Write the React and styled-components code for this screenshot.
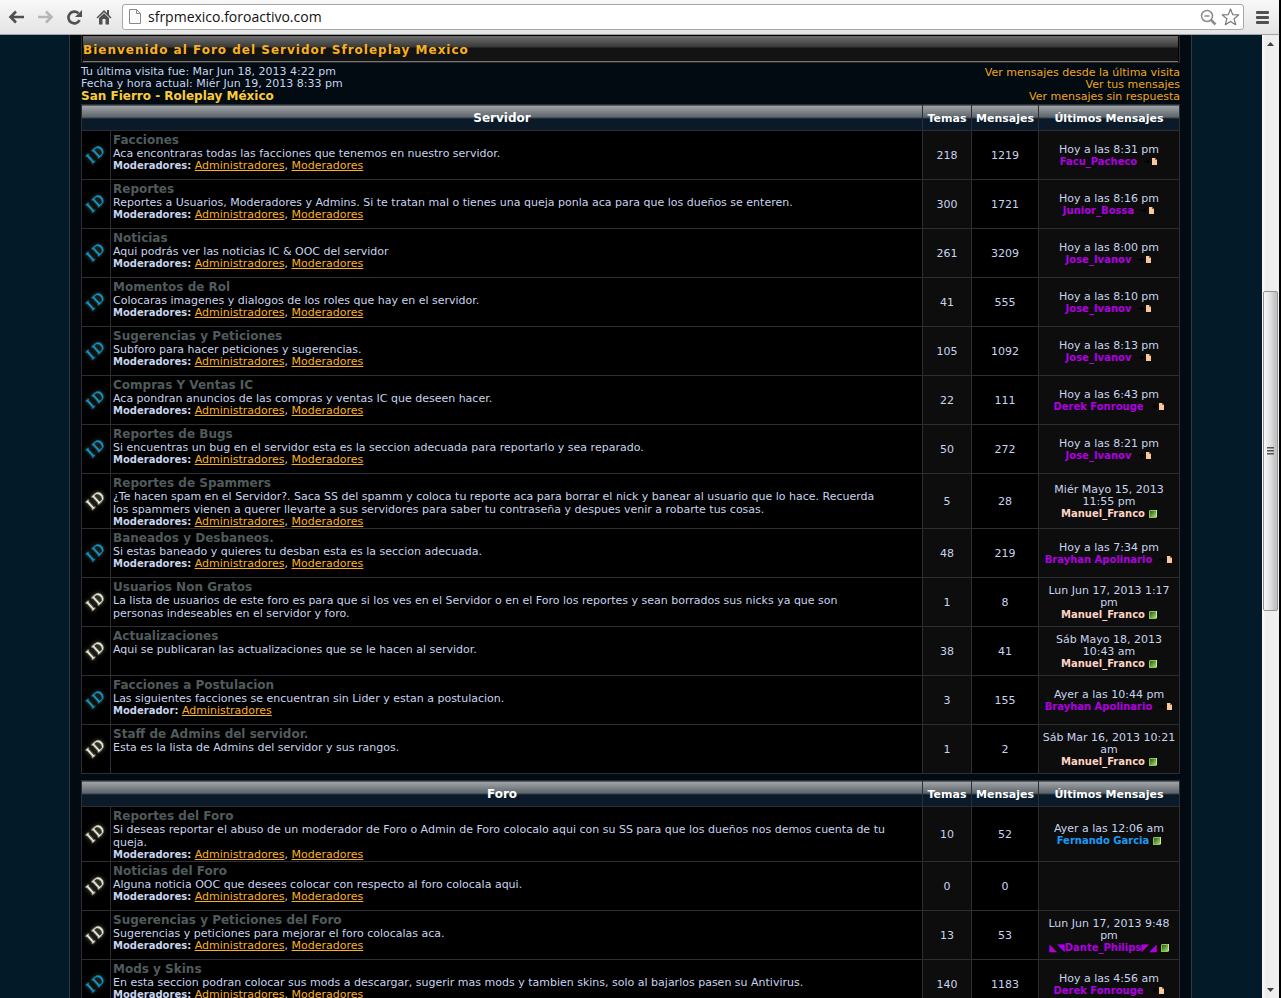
import React from "react";
import styled, { createGlobalStyle } from "styled-components";

const GlobalStyle = createGlobalStyle`
* {
  box-sizing: border-box;
}

body {
  margin: 0;
  background: #000;
  font-family: Verdana, "DejaVu Sans", sans-serif;
}
`;

const Browser = styled.div`
height: 100vh;
padding-right: 2px;
display: flex;
flex-direction: column;
overflow: hidden;
background: #000;
`;

const Toolbar = styled.header`
flex: none;
height: 35px;
padding: 0 6px;
display: flex;
align-items: center;
gap: 8px;
background: linear-gradient(#f8f8f8, #e4e4e4);
border-bottom: 1px solid #a3a3a3;
`;

const ToolButton = styled.button`
width: 21px;
height: 24px;
padding: 0;
border: 0;
background: none;
display: flex;
align-items: center;
justify-content: center;
opacity: ${({ $faded }) => ($faded ? "0.35" : "1")};
`;

const AddressBar = styled.form`
flex: 1;
height: 26px;
padding: 0 3px 0 5px;
display: flex;
align-items: center;
gap: 6px;
background: #fff;
border: 1px solid #a8a8a8;
border-radius: 3px;
`;

const AddressInput = styled.input`
flex: 1;
min-width: 0;
padding: 0;
border: 0;
outline: 0;
background: none;
color: #111;
font: 14px/20px "Open Sans", sans-serif;
`;

const BarIcons = styled.div`
display: flex;
align-items: center;
gap: 4px;
`;

const Viewport = styled.div`
flex: 1;
min-height: 0;
display: flex;
`;

const Page = styled.div`
flex: 1;
min-width: 0;
padding: 0 70px 0 69px;
overflow: hidden;
background: #031a28;
`;

const Forum = styled.main`
min-height: 100%;
padding: 0 11px;
background: #010b11;
border: solid #33383d;
border-width: 0 1px;
`;

const Banner = styled.div`
height: 28px;
padding: 1px 1px 0;
background: #000;
border: solid #2b2b2d;
border-width: 0 1px 1px;
`;

const BannerTitle = styled.h1`
height: 26px;
margin: 0;
padding-top: 3px;
background: linear-gradient(#6e6e6e, #393939 11px, #131313 12px, #131313);
border-bottom: 1px solid #777;
color: #f9b11c;
font-size: 12px;
line-height: 22px;
letter-spacing: 1px;
white-space: nowrap;
overflow: hidden;
`;

const Welcome = styled.section`
padding: 3px 0 1px;
display: flex;
justify-content: space-between;
align-items: flex-end;
color: #c8d4ee;
font-size: 11px;
line-height: 12px;
`;

const ForumName = styled.a`
display: block;
color: #fccb3a;
font-size: 12px;
font-weight: bold;
line-height: 13px;
text-decoration: none;
`;

const SearchLinks = styled.nav`
display: flex;
flex-direction: column;
align-items: flex-end;

a {
  color: #f0a51c;
  text-decoration: none;
}
`;

const Category = styled.table`
width: 100%;
margin-bottom: 6px;
table-layout: fixed;
border-collapse: collapse;
color: #c8d4ee;

th, td {
  border: 1px solid #2c2e33;
}
`;

const Col = styled.col`
width: ${({ $width }) => $width};
`;

const HeadCell = styled.th`
height: 26px;
padding: 1px 0 0;
background: linear-gradient(#a4a6a9, #596369 12px, #0a1a29 13px, #0a1a29);
color: #fff;
font-size: ${({ $small }) => ($small ? "11px" : "12px")};
line-height: 13px;
white-space: nowrap;
`;

const Cell = styled.td`
height: 49px;
padding: 2px 2px 0;
background: ${({ $light }) => ($light ? "#0d0d0d" : "#000")};
text-align: center;
font-size: 11px;
line-height: 12px;
`;

const IconCell = styled(Cell)`
padding: 0;

svg {
  display: block;
  margin: 0 auto;
}
`;

const InfoCell = styled(Cell)`
text-align: left;
vertical-align: top;
`;

const ForumTitle = styled.a`
display: block;
color: #505b5d;
font-size: 12px;
font-weight: bold;
line-height: 14px;
text-decoration: none;
`;

const Description = styled.p`
margin: 0;
padding-right: 32px;
line-height: 13px;
`;

const Moderators = styled.p`
margin: 0;

b {
  font-size: 10px;
}

a {
  color: #fbb024;
}
`;

const LastUser = styled.span`
font-size: 10px;
white-space: nowrap;

a {
  color: ${({ $color }) => $color};
  font-weight: bold;
  text-decoration: none;
}

svg {
  margin-left: 3px;
  vertical-align: -1px;
}
`;

const ScrollBar = styled.aside`
flex: none;
width: 17px;
display: flex;
flex-direction: column;
align-items: center;
background: linear-gradient(90deg, #fafafa, #ececec 4px, #f0f0f0);
`;

const ScrollButton = styled.button`
flex: none;
width: 17px;
height: 17px;
padding: 0;
border: 0;
background: none;
display: flex;
align-items: center;
justify-content: center;
`;

const Track = styled.div`
flex: 1;
display: flex;
flex-direction: column;
align-items: center;
`;

const Spacer = styled.div`
flex: ${({ $grow }) => $grow} 0 0;
`;

const Thumb = styled.div`
flex: 318 0 0;
width: 15px;
display: flex;
align-items: center;
justify-content: center;
background: linear-gradient(90deg, #f8f8f8, #e2e2e2 6px, #bdbec2 12px, #d0d0d2);
border: 1px solid #929292;
border-radius: 2px;
`;

const PURPLE = "#b000e0";
const PINK = "#ffd3c4";
const BLUE = "#1b9bf5";

const servidor = [
  { title: "Facciones", text: "Aca encontraras todas las facciones que tenemos en nuestro servidor.", mods: 2, topics: 218, posts: 1219, date: "Hoy a las 8:31 pm", user: "Facu_Pacheco", color: PURPLE, unread: true },
  { title: "Reportes", text: "Reportes a Usuarios, Moderadores y Admins. Si te tratan mal o tienes una queja ponla aca para que los dueños se enteren.", mods: 2, topics: 300, posts: 1721, date: "Hoy a las 8:16 pm", user: "Junior_Bossa", color: PURPLE, unread: true },
  { title: "Noticias", text: "Aqui podrás ver las noticias IC & OOC del servidor", mods: 2, topics: 261, posts: 3209, date: "Hoy a las 8:00 pm", user: "Jose_Ivanov", color: PURPLE, unread: true },
  { title: "Momentos de Rol", text: "Colocaras imagenes y dialogos de los roles que hay en el servidor.", mods: 2, topics: 41, posts: 555, date: "Hoy a las 8:10 pm", user: "Jose_Ivanov", color: PURPLE, unread: true },
  { title: "Sugerencias y Peticiones", text: "Subforo para hacer peticiones y sugerencias.", mods: 2, topics: 105, posts: 1092, date: "Hoy a las 8:13 pm", user: "Jose_Ivanov", color: PURPLE, unread: true },
  { title: "Compras Y Ventas IC", text: "Aca pondran anuncios de las compras y ventas IC que deseen hacer.", mods: 2, topics: 22, posts: 111, date: "Hoy a las 6:43 pm", user: "Derek Fonrouge", color: PURPLE, unread: true },
  { title: "Reportes de Bugs", text: "Si encuentras un bug en el servidor esta es la seccion adecuada para reportarlo y sea reparado.", mods: 2, topics: 50, posts: 272, date: "Hoy a las 8:21 pm", user: "Jose_Ivanov", color: PURPLE, unread: true },
  { title: "Reportes de Spammers", text: "¿Te hacen spam en el Servidor?. Saca SS del spamm y coloca tu reporte aca para borrar el nick y banear al usuario que lo hace. Recuerda los spammers vienen a querer llevarte a sus servidores para saber tu contraseña y despues venir a robarte tus cosas.", mods: 2, topics: 5, posts: 28, date: "Miér Mayo 15, 2013 11:55 pm", user: "Manuel_Franco", color: PINK },
  { title: "Baneados y Desbaneos.", text: "Si estas baneado y quieres tu desban esta es la seccion adecuada.", mods: 2, topics: 48, posts: 219, date: "Hoy a las 7:34 pm", user: "Brayhan Apolinario", color: PURPLE, unread: true },
  { title: "Usuarios Non Gratos", text: "La lista de usuarios de este foro es para que si los ves en el Servidor o en el Foro los reportes y sean borrados sus nicks ya que son personas indeseables en el servidor y foro.", mods: 0, topics: 1, posts: 8, date: "Lun Jun 17, 2013 1:17 pm", user: "Manuel_Franco", color: PINK },
  { title: "Actualizaciones", text: "Aqui se publicaran las actualizaciones que se le hacen al servidor.", mods: 0, topics: 38, posts: 41, date: "Sáb Mayo 18, 2013 10:43 am", user: "Manuel_Franco", color: PINK },
  { title: "Facciones a Postulacion", text: "Las siguientes facciones se encuentran sin Lider y estan a postulacion.", mods: 1, topics: 3, posts: 155, date: "Ayer a las 10:44 pm", user: "Brayhan Apolinario", color: PURPLE, unread: true },
  { title: "Staff de Admins del servidor.", text: "Esta es la lista de Admins del servidor y sus rangos.", mods: 0, topics: 1, posts: 2, date: "Sáb Mar 16, 2013 10:21 am", user: "Manuel_Franco", color: PINK },
];

const foro = [
  { title: "Reportes del Foro", text: "Si deseas reportar el abuso de un moderador de Foro o Admin de Foro colocalo aqui con su SS para que los dueños nos demos cuenta de tu queja.", mods: 2, topics: 10, posts: 52, date: "Ayer a las 12:06 am", user: "Fernando Garcia", color: BLUE },
  { title: "Noticias del Foro", text: "Alguna noticia OOC que desees colocar con respecto al foro colocala aqui.", mods: 2, topics: 0, posts: 0 },
  { title: "Sugerencias y Peticiones del Foro", text: "Sugerencias y peticiones para mejorar el foro colocalas aca.", mods: 2, topics: 13, posts: 53, date: "Lun Jun 17, 2013 9:48 pm", user: "◣◥Dante_Philips◤◢", color: PURPLE },
  { title: "Mods y Skins", text: "En esta seccion podran colocar sus mods a descargar, sugerir mas mods y tambien skins, solo al bajarlos pasen su Antivirus.", mods: 2, topics: 140, posts: 1183, date: "Hoy a las 4:56 am", user: "Derek Fonrouge", color: PURPLE, unread: true },
];

const IdGlyph = styled.text`
font: 14px "Liberation Serif", serif;
fill: ${({ $unread }) => ($unread ? "#10a8ea" : "#fffff4")};
stroke: ${({ $unread }) => ($unread ? "#10a8ea" : "#fffff4")};
stroke-width: 0.4px;
filter: drop-shadow(0 0 2px ${({ $unread }) => ($unread ? "#5b5a3c" : "#8a8a60")});
`;

const IdIcon = ({ unread }) => (
  <svg width="28" height="30" viewBox="0 0 28 30">
    <IdGlyph $unread={unread} transform="translate(10 24) rotate(-42)" x="0 8" y="0">ID</IdGlyph>
  </svg>
);

const UnreadIcon = () => (
  <svg width="18" height="9" viewBox="0 0 18 9">
    <path d="M4 4h3V2l3 2.500-3 2.500V5H4z" fill="#000" />
    <path d="M12 1h3l2 2v5h-5z" fill="#f8c89a" />
    <path d="M15 1v2h2z" fill="#8a5c38" />
  </svg>
);

const ReadIcon = () => (
  <svg width="9" height="9" viewBox="0 0 9 9">
    <defs>
      <linearGradient id="leaf" x1="0" y1="0" x2="1" y2="1">
        <stop offset="0" stopColor="#2f5a14" />
        <stop offset="1" stopColor="#a5dc6c" />
      </linearGradient>
    </defs>
    <path d="M2 1h7v7l-1 1H1V2z" fill="#8cc552" />
    <path d="M2 2h6v6H2z" fill="url(#leaf)" />
    <path d="M8 1h1v7H8z" fill="#c9e8a0" />
  </svg>
);

const ForumRow = ({ title, text, mods, topics, posts, date, user, color, unread }) => (
  <tr>
    <IconCell><IdIcon unread={unread} /></IconCell>
    <InfoCell>
      <ForumTitle href="#foro">{title}</ForumTitle>
      <Description>{text}</Description>
      {mods > 0 && (
        <Moderators>
          <b>{mods > 1 ? "Moderadores:" : "Moderador:"}</b> <a href="#admins">Administradores</a>
          {mods > 1 && <>, <a href="#mods">Moderadores</a></>}
        </Moderators>
      )}
    </InfoCell>
    <Cell $light>{topics}</Cell>
    <Cell>{posts}</Cell>
    <Cell $light>
      {date && (
        <>
          {date}<br />
          <LastUser $color={color}>
            <a href="#perfil">{user}</a>
            {unread ? <UnreadIcon /> : <ReadIcon />}
          </LastUser>
        </>
      )}
    </Cell>
  </tr>
);

const ForumTable = ({ name, rows }) => (
  <Category>
    <colgroup>
      <Col $width="29px" />
      <Col $width="auto" />
      <Col $width="49px" />
      <Col $width="67px" />
      <Col $width="141px" />
    </colgroup>
    <thead>
      <tr>
        <HeadCell colSpan={2}>{name}</HeadCell>
        <HeadCell $small>Temas</HeadCell>
        <HeadCell $small>Mensajes</HeadCell>
        <HeadCell $small>Últimos Mensajes</HeadCell>
      </tr>
    </thead>
    <tbody>
      {rows.map((row) => <ForumRow key={row.title} {...row} />)}
    </tbody>
  </Category>
);

const BrowserBar = () => (
  <Toolbar>
    <ToolButton aria-label="Atrás">
      <svg width="17" height="16" viewBox="0 0 17 16" fill="none" stroke="#505050" strokeWidth="2.600">
        <path d="M8 2.500L2.500 8 8 13.500M2.500 8H16" />
      </svg>
    </ToolButton>
    <ToolButton $faded aria-label="Adelante">
      <svg width="17" height="16" viewBox="0 0 17 16" fill="none" stroke="#505050" strokeWidth="2.600">
        <path d="M9 2.500L14.500 8 9 13.500M14.500 8H1" />
      </svg>
    </ToolButton>
    <ToolButton aria-label="Recargar">
      <svg width="17" height="17" viewBox="0 0 17 17">
        <path d="M13.600 11.200A5.900 5.900 0 1 1 12.400 4.200" fill="none" stroke="#505050" strokeWidth="2.600" />
        <path d="M16 1v7H9z" fill="#505050" />
      </svg>
    </ToolButton>
    <ToolButton aria-label="Inicio">
      <svg width="16" height="16" viewBox="0 0 16 16" fill="#505050">
        <path d="M8 1L0.500 8.500l1 1L8 3.200l6.500 6.300 1-1L13 6V1h-2v3z" />
        <path d="M3 9l5-4.700L13 9v6.500H9.500V10h-3v5.500H3z" />
      </svg>
    </ToolButton>
    <AddressBar>
      <svg width="14" height="18" viewBox="0 0 14 18" fill="#fafafa" stroke="#8a8a8a">
        <path d="M1.500 1.500h7l4 4v10h-11zM8.500 1.500v4h4" />
      </svg>
      <AddressInput aria-label="Dirección" defaultValue="sfrpmexico.foroactivo.com" />
      <BarIcons>
        <svg width="17" height="17" viewBox="0 0 17 17" fill="none" stroke="#8c8c8c">
          <circle cx="7" cy="7" r="5.500" strokeWidth="1.500" />
          <path d="M4.500 7h5" strokeWidth="1.500" />
          <path d="M11 11l4.500 4.500" strokeWidth="2.500" />
        </svg>
        <svg width="19" height="18" viewBox="0 0 19 18" fill="#fff" stroke="#777" strokeWidth="1.200">
          <path d="M9.500 1l2.200 5.600 6.100.3-4.700 3.900 1.600 5.900-5.200-3.300-5.200 3.300 1.600-5.900L1.200 6.900l6.100-.3z" strokeLinejoin="round" />
        </svg>
      </BarIcons>
    </AddressBar>
    <ToolButton aria-label="Menú">
      <svg width="13" height="13" viewBox="0 0 13 13" fill="#505050">
        <rect width="13" height="3" rx="1" />
        <rect y="5" width="13" height="3" rx="1" />
        <rect y="10" width="13" height="3" rx="1" />
      </svg>
    </ToolButton>
  </Toolbar>
);

const PageScroll = () => (
  <ScrollBar>
    <ScrollButton aria-label="Subir">
      <svg width="7" height="4" viewBox="0 0 7 4"><path d="M0 4l3.500-4L7 4z" fill="#404040" /></svg>
    </ScrollButton>
    <Track>
      <Spacer $grow={240} />
      <Thumb>
        <svg width="7" height="8" viewBox="0 0 7 8" fill="#555">
          <path d="M0 0h7v1.500H0zM0 3h7v1.500H0zM0 6h7v1.500H0z" />
        </svg>
      </Thumb>
      <Spacer $grow={371} />
    </Track>
    <ScrollButton aria-label="Bajar">
      <svg width="7" height="4" viewBox="0 0 7 4"><path d="M0 0h7L3.500 4z" fill="#404040" /></svg>
    </ScrollButton>
  </ScrollBar>
);

const App = () => (
  <Browser>
    <GlobalStyle />
    <BrowserBar />
    <Viewport>
      <Page>
        <Forum>
          <Banner>
            <BannerTitle>Bienvenido al Foro del Servidor Sfroleplay Mexico</BannerTitle>
          </Banner>
          <Welcome>
            <div>
              Tu última visita fue: Mar Jun 18, 2013 4:22 pm<br />
              Fecha y hora actual: Miér Jun 19, 2013 8:33 pm
              <ForumName href="#inicio">San Fierro - Roleplay México</ForumName>
            </div>
            <SearchLinks>
              <a href="#nuevos">Ver mensajes desde la última visita</a>
              <a href="#propios">Ver tus mensajes</a>
              <a href="#sin-respuesta">Ver mensajes sin respuesta</a>
            </SearchLinks>
          </Welcome>
          <ForumTable name="Servidor" rows={servidor} />
          <ForumTable name="Foro" rows={foro} />
        </Forum>
      </Page>
      <PageScroll />
    </Viewport>
  </Browser>
);

export default App;
